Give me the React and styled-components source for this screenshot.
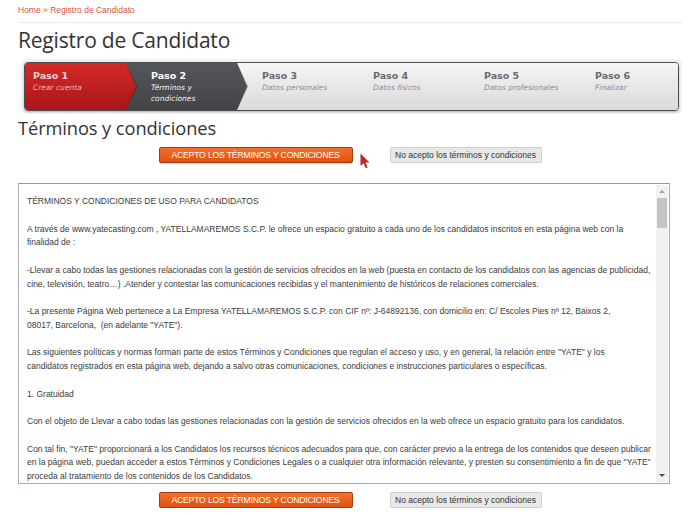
import React from "react";
import styled, { createGlobalStyle, css } from "styled-components";

const GlobalStyle = createGlobalStyle`
  body {
    margin: 0;
    background: #fff;
    font-family: "Liberation Sans", Arial, sans-serif;
    color: #333;
  }
`;

const steps = [
  { title: "Paso 1", sub: "Crear cuenta", state: "done" },
  { title: "Paso 2", sub: ["Términos y", "condiciones"], state: "current" },
  { title: "Paso 3", sub: "Datos personales" },
  { title: "Paso 4", sub: "Datos físicos" },
  { title: "Paso 5", sub: "Datos profesionales" },
  { title: "Paso 6", sub: "Finalizar", last: true },
];

const App = () => {
  return (
    <StyledWrapper>
      <GlobalStyle />
      <div className="breadcrumb">
        <a>Home</a> » <a>Registro de Candidato</a>
      </div>
      <h1 className="title">Registro de Candidato</h1>

      <StepsFrame>
        <StepsBar>
          {steps.map((s, i) => (
            <Step key={i} $state={s.state} $first={i === 0} $last={s.last}>
              <StepTitle $state={s.state}>{s.title}</StepTitle>
              <StepSub $state={s.state}>
                {Array.isArray(s.sub)
                  ? s.sub.map((l, j) => <div key={j}>{l}</div>)
                  : s.sub}
              </StepSub>
            </Step>
          ))}
        </StepsBar>
      </StepsFrame>

      <h2 className="subtitle">Términos y condiciones</h2>

      <ButtonRow $top={8}>
        <AcceptButton>ACEPTO LOS TÉRMINOS Y CONDICIONES</AcceptButton>
        <DeclineButton>No acepto los términos y condiciones</DeclineButton>
        <Cursor viewBox="0 0 10 16" width="10" height="16">
          <path d="M0.5 0.5 L0.5 13 L3.6 10.2 L5.8 15.2 L7.6 14.4 L5.5 9.6 L9.5 9.4 Z" fill="#c0272d" />
        </Cursor>
      </ButtonRow>

      <TermsBox>
        <TermsText>
          <p>TÉRMINOS Y CONDICIONES DE USO PARA CANDIDATOS</p>
          <p>
            A través de www.yatecasting.com , YATELLAMAREMOS S.C.P. le ofrece un espacio gratuito a cada uno
            de los candidatos inscritos en esta página web con la finalidad de :
          </p>
          <p>
            -Llevar a cabo todas las gestiones relacionadas con la gestión de servicios ofrecidos en la web
            (puesta en contacto de los candidatos con las agencias de publicidad, cine, televisión, teatro…)
            .Atender y contestar las comunicaciones recibidas y el mantenimiento de históricos de relaciones
            comerciales.
          </p>
          <p>
            -La presente Página Web pertenece a La Empresa YATELLAMAREMOS S.C.P. con CIF nº: J-64892136, con
            domicilio en: C/ Escoles Pies nº 12, Baixos 2,
            <br />
            08017, Barcelona,&nbsp; (en adelante "YATE").
          </p>
          <p>
            Las siguientes políticas y normas forman parte de estos Términos y Condiciones que regulan el acceso
            y uso, y en general, la relación entre "YATE" y los
            <br />
            candidatos registrados en esta página web, dejando a salvo otras comunicaciones, condiciones e
            instrucciones particulares o específicas.
          </p>
          <p>1. Gratuidad</p>
          <p>
            Con el objeto de Llevar a cabo todas las gestiones relacionadas con la gestión de servicios
            ofrecidos en la web ofrece un espacio gratuito para los candidatos.
          </p>
          <p>
            Con tal fin, "YATE" proporcionará a los Candidatos los recursos técnicos adecuados para que, con
            carácter previo a la entrega de los contenidos que deseen publicar en la página web, puedan acceder
            a estos Términos y Condiciones Legales o a cualquier otra información relevante, y presten su
            consentimiento a fin de que "YATE" proceda al tratamiento de los contenidos de los Candidatos.
          </p>
        </TermsText>
        <Scrollbar>
          <ScrollArrow $dir="up" />
          <ScrollThumb />
          <ScrollTrack />
          <ScrollArrow $dir="down" />
        </Scrollbar>
      </TermsBox>

      <ButtonRow $top={8}>
        <AcceptButton>ACEPTO LOS TÉRMINOS Y CONDICIONES</AcceptButton>
        <DeclineButton>No acepto los términos y condiciones</DeclineButton>
      </ButtonRow>
    </StyledWrapper>
  );
};

const StyledWrapper = styled.div`
  width: 664px;
  padding: 0 18px;

  .breadcrumb {
    padding: 5px 0 6px;
    font-size: 8.5px;
    line-height: 11px;
    color: #e0513e;
    border-bottom: 1px solid #ebebeb;
  }

  .breadcrumb a {
    color: #e0513e;
    text-decoration: none;
  }

  .title {
    margin: 4px 0 0;
    font-family: "Open Sans", sans-serif;
    font-weight: 400;
    font-size: 21px;
    line-height: 26px;
    color: #333;
    letter-spacing: -0.2px;
  }

  .subtitle {
    margin: 3px 0 0;
    font-family: "Open Sans", sans-serif;
    font-weight: 400;
    font-size: 18.3px;
    line-height: 22px;
    color: #333;
    letter-spacing: -0.1px;
  }
`;

const StepsFrame = styled.div`
  margin-top: 6px;
  margin-left: 3px;
  padding: 3px;
  background: #f1f1f1;
  border-radius: 6px;
`;

const StepsBar = styled.div`
  display: grid;
  grid-template-columns: 101px repeat(4, 111px) 1fr;
  height: 47px;
  border: 1px solid #4d4d4f;
  border-radius: 4px;
  overflow: hidden;
  background: linear-gradient(#f5f5f5, #dcdcdd);
  box-shadow: 0 1px 2px rgba(0, 0, 0, 0.25);
`;

const stepBg = {
  done: "linear-gradient(#d42a25, #a8161a)",
  current: "linear-gradient(#55565a, #434448)",
  todo: "linear-gradient(#f5f5f5, #dadadb)",
};

const Step = styled.div`
  position: relative;
  padding: 6px 0 0 ${(p) => (p.$first ? 8 : 25)}px;
  white-space: nowrap;
  background: ${(p) => stepBg[p.$state || "todo"]};
  z-index: ${(p) => (p.$state === "done" ? 3 : p.$state === "current" ? 2 : 1)};

  ${(p) =>
    !p.$last &&
    css`
      &::before,
      &::after {
        content: "";
        position: absolute;
        top: 0;
        bottom: 0;
        clip-path: polygon(0 0, 100% 50%, 0 100%);
      }
      &::before {
        right: -11px;
        width: 11px;
        background: ${p.$state === "done" || p.$state === "current"
          ? "rgba(0,0,0,0.35)"
          : "#cfcfd1"};
      }
      &::after {
        right: -10px;
        width: 10px;
        background: ${stepBg[p.$state || "todo"]};
      }
    `}
`;

const StepTitle = styled.div`
  font-family: "DejaVu Sans", Verdana, sans-serif;
  font-weight: bold;
  font-size: 9.5px;
  line-height: 13px;
  color: ${(p) => (p.$state === "done" ? "#f4cfcd" : p.$state === "current" ? "#ffffff" : "#6a6a6c")};
`;

const StepSub = styled.div`
  font-family: "DejaVu Sans", Verdana, sans-serif;
  font-style: italic;
  font-size: 7.5px;
  line-height: 11px;
  color: ${(p) => (p.$state === "done" ? "#eeb3b1" : p.$state === "current" ? "#f0f0f0" : "#8e8e90")};
`;

const ButtonRow = styled.div`
  position: relative;
  margin-top: ${(p) => p.$top}px;
  display: flex;
  justify-content: center;
  gap: 37px;
`;

const AcceptButton = styled.button`
  width: 194px;
  height: 16px;
  padding: 0;
  border: 1px solid #a63a12;
  border-radius: 2px;
  background: linear-gradient(#f4702c, #e2500f);
  color: #fff;
  font-family: "Liberation Sans", Arial, sans-serif;
  font-size: 8.6px;
  letter-spacing: -0.15px;
  line-height: 14px;
  box-shadow: 0 1px 1px rgba(0, 0, 0, 0.2);
`;

const DeclineButton = styled.button`
  width: 152px;
  height: 16px;
  padding: 0;
  border: 1px solid #cfcfcf;
  border-radius: 2px;
  background: #e8e8e8;
  color: #333;
  font-family: "Liberation Sans", Arial, sans-serif;
  font-size: 8.5px;
  line-height: 14px;
`;

const Cursor = styled.svg`
  position: absolute;
  left: 342px;
  top: 6px;
`;

const TermsBox = styled.div`
  margin-top: 20px;
  width: 652px;
  height: 301px;
  box-sizing: border-box;
  display: flex;
  border: 1px solid #acacac;
  border-top-color: #9a9a9a;
`;

const TermsText = styled.div`
  flex: 1;
  overflow: hidden;
  padding: 11px 2px 0 8px;
  font-size: 8.5px;
  line-height: 13.75px;
  color: #3a3a3a;

  p {
    margin: 0 0 13.75px;
  }
`;

const Scrollbar = styled.div`
  width: 12px;
  margin: 1px 1px 1px 0;
  display: flex;
  flex-direction: column;
  background: #f1f1f1;
`;

const ScrollArrow = styled.div`
  height: 13px;
  display: flex;
  align-items: center;
  justify-content: center;

  &::before {
    content: "";
    border-left: 3px solid transparent;
    border-right: 3px solid transparent;
    ${(p) =>
      p.$dir === "up"
        ? "border-bottom: 3px solid #a3a3a3;"
        : "border-top: 3px solid #505050;"}
  }
`;

const ScrollThumb = styled.div`
  height: 30px;
  margin: 0 1px;
  background: #c4c4c4;
`;

const ScrollTrack = styled.div`
  flex: 1;
`;

export default App;
